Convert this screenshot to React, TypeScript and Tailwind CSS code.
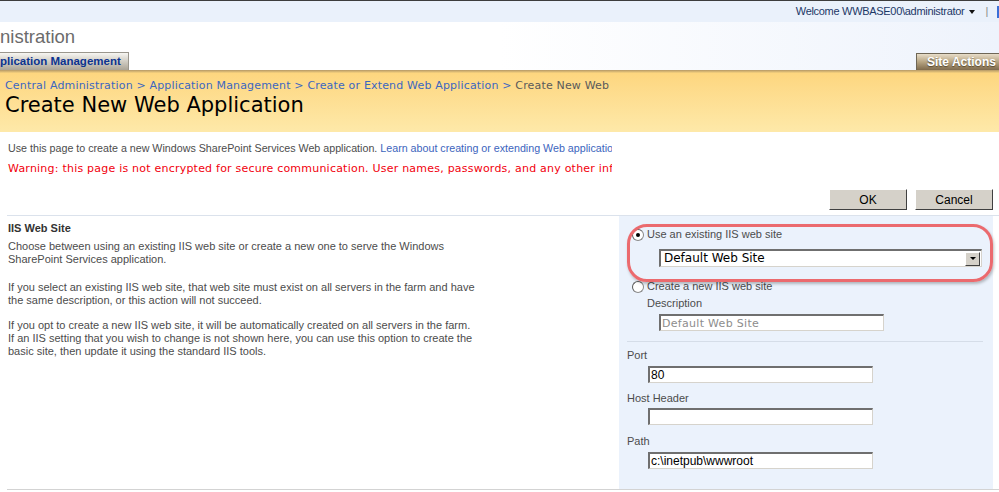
function Radio({ checked }: { checked?: boolean }) {
  return (
    <span className="w-[12px] h-[12px] rounded-full bg-white border border-[#8a8a8a] border-t-[#5a5a5a] border-l-[#5a5a5a] flex items-center justify-center shrink-0">
      {checked && <span className="w-[4px] h-[4px] rounded-full bg-black" />}
    </span>
  );
}

function TextBox({ value, width, disabled }: { value: string; width: string; disabled?: boolean }) {
  return (
    <div
      className={`${width} h-[17px] bg-white border-t-2 border-l-2 border-b border-r border-t-[#6f6f6f] border-l-[#6f6f6f] border-b-[#d6d3cc] border-r-[#d6d3cc] flex items-center pl-[1px] ${disabled ? "text-[#8d8d8d] font-['DejaVu_Sans'] text-[11px] tracking-[0.3px]" : "text-black text-[12px]"}`}
    >
      {value}
    </div>
  );
}

export default function App() {
  return (
    <div className="w-[999px] h-[492px] overflow-hidden bg-white relative font-['Liberation_Sans',sans-serif] text-[11px] text-[#4c4c4c]">
      {/* top welcome bar */}
      <div className="h-[1px] bg-[#3d3d3d]" />
      <div className="h-[21px] bg-[#eaf1fb] flex items-center justify-end text-[11px] tracking-[-0.3px] text-[#1d3867]">
        <span>Welcome WWBASE00\administrator</span>
        <span className="ml-[5px] mt-[1px] w-0 h-0 border-l-[3px] border-r-[3px] border-t-[4px] border-l-transparent border-r-transparent border-t-[#111]" />
        <span className="ml-[10px] text-[#8a8a8a]">|</span>
        <span className="ml-[9px] w-[2px] h-[12px] bg-[#3a6fd8]" />
      </div>

      {/* header */}
      <div className="h-[48px] bg-gradient-to-r from-white via-white to-[#eef3fc] flex flex-col justify-between">
        <div className="pt-[4px] text-[18.5px] text-[#6b6b6b] leading-[22px]">nistration</div>
        <div className="flex justify-between items-end">
          <div className="w-[129px] h-[18px] bg-gradient-to-b from-[#f7f6f2] to-[#aba496] border-t border-r border-[#9a968d] flex items-center text-[11.5px] font-bold text-[#0b3390]">
            plication Management
          </div>
          <div className="w-[83px] h-[17px] bg-gradient-to-b from-[#e8ddc9] via-[#b6a482] to-[#7f6b4d] border-t border-l border-[#6e6656] flex items-center pl-[10px] text-[12px] font-bold text-white [text-shadow:0_1px_1px_#5a4a30]">
            Site Actions
          </div>
        </div>
      </div>

      {/* page title band */}
      <div className="h-[3px] bg-gradient-to-b from-[#b49866] to-[#f8d37f]" />
      <div className="h-[59px] bg-gradient-to-b from-[#fdd67f] to-[#fee9a9] pl-[5px] overflow-hidden">
        <div className="w-[607px] overflow-hidden whitespace-nowrap font-['DejaVu_Sans'] text-[11px] tracking-[0.17px] leading-[13px] pt-[6px] text-[#3c67c0]">
          Central Administration &gt; Application Management &gt; Create or Extend Web Application &gt;{" "}
          <span className="text-[#5a5a5a]">Create New Web Application</span>
        </div>
        <div className="font-['DejaVu_Sans'] text-[21px] leading-[26px] text-black">Create New Web Application</div>
      </div>

      {/* intro */}
      <div className="pl-[8px] w-[612px] overflow-hidden whitespace-nowrap">
        <div className="pt-[9px] leading-[14px] text-[10.7px] text-[#4c4c4c]">
          Use this page to create a new Windows SharePoint Services Web application.{" "}
          <span className="text-[#3c64bd]">Learn about creating or extending Web applications.</span>
        </div>
        <div className="pt-[7px] leading-[14px] font-['DejaVu_Sans'] text-[11px] tracking-[0.22px] text-[#f2000d]">
          Warning: this page is not encrypted for secure communication. User names, passwords, and any other information will be sent in clear text.
        </div>
      </div>

      {/* buttons */}
      <div className="flex justify-end gap-[8px] pr-[6px] pt-[13px]">
        {["OK", "Cancel"].map((b) => (
          <div
            key={b}
            className="w-[78px] h-[21px] bg-[#d5d1c9] border border-t-white border-l-white border-b-[#404040] border-r-[#404040] flex items-center justify-center text-[12px] text-black"
          >
            {b}
          </div>
        ))}
      </div>

      {/* section */}
      <div className="ml-[7px] mt-[5px] w-[992px] border-t border-[#dbe2ec] flex h-[275px] border-b border-b-[#d3d3d3]">
        <div className="w-[612px] pl-[1px] pt-[6px] leading-[13px]">
          <div className="font-bold text-[#333]">IIS Web Site</div>
          <p className="mt-[5px]">
            Choose between using an existing IIS web site or create a new one to serve the Windows
            <br />
            SharePoint Services application.
          </p>
          <p className="mt-[15px]">
            If you select an existing IIS web site, that web site must exist on all servers in the farm and have
            <br />
            the same description, or this action will not succeed.
          </p>
          <p className="mt-[12px]">
            If you opt to create a new IIS web site, it will be automatically created on all servers in the farm.
            <br />
            If an IIS setting that you wish to change is not shown here, you can use this option to create the
            <br />
            basic site, then update it using the standard IIS tools.
          </p>
        </div>

        <div className="w-[374px] bg-[#ebf2fc] relative pl-[8px] pt-[12px] leading-[13px]">
          <div className="absolute left-[8px] top-[8px] w-[366px] h-[58px] rounded-[20px] border-[3px] border-[#eb6a6e] shadow-[1px_2px_3px_rgba(0,0,0,0.25)]" />
          <div className="flex items-center gap-[3px] pl-[5px]">
            <Radio checked />
            <span>Use an existing IIS web site</span>
          </div>
          <div className="ml-[32px] mt-[8px] w-[323px] h-[18px] bg-white border-t-2 border-l-2 border-b border-r border-t-[#6f6f6f] border-l-[#6f6f6f] border-b-[#d6d3cc] border-r-[#d6d3cc] flex items-center justify-between font-['DejaVu_Sans'] text-[12px] text-black pl-[3px]">
            <span>Default Web Site</span>
            <span className="w-[15px] h-[14px] mr-[1px] bg-[#d5d1c9] border border-t-white border-l-white border-b-[#404040] border-r-[#404040] flex items-center justify-center">
              <span className="w-0 h-0 border-l-[3px] border-r-[3px] border-t-[3px] border-l-transparent border-r-transparent border-t-black" />
            </span>
          </div>
          <div className="flex items-center gap-[3px] pl-[5px] mt-[13px]">
            <Radio />
            <span>Create a new IIS web site</span>
          </div>
          <div className="ml-[20px] mt-[4px]">Description</div>
          <div className="ml-[32px] mt-[4px]">
            <TextBox value="Default Web Site" width="w-[225px]" disabled />
          </div>
          <div className="mt-[10px] mr-[10px] border-t border-[#d5dde8]" />
          <div className="mt-[7px]">Port</div>
          <div className="ml-[21px] mt-[4px]">
            <TextBox value="80" width="w-[225px]" />
          </div>
          <div className="mt-[9px]">Host Header</div>
          <div className="ml-[21px] mt-[3px]">
            <TextBox value="" width="w-[225px]" />
          </div>
          <div className="mt-[10px]">Path</div>
          <div className="ml-[21px] mt-[4px]">
            <TextBox value="c:\inetpub\wwwroot" width="w-[225px]" />
          </div>
        </div>
      </div>
    </div>
  );
}
